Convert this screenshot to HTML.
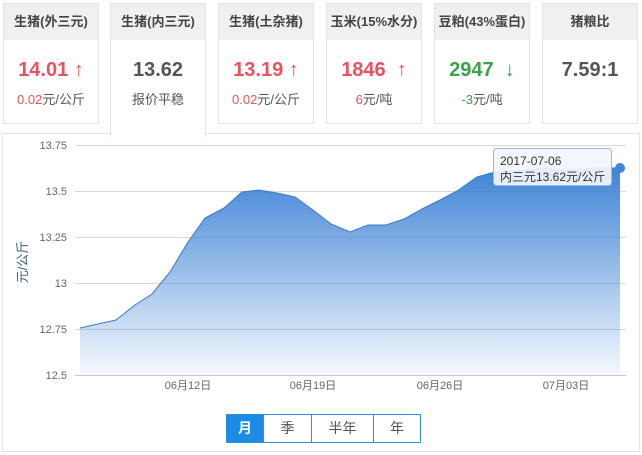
<!DOCTYPE html>
<html><head><meta charset="utf-8"><style>
body{margin:0;width:642px;height:455px;background:#fff;font-family:"Liberation Sans","Noto Sans CJK SC",sans-serif;position:relative;overflow:hidden}
.c{position:absolute;top:3px;width:96px;height:121px;border:1px solid #e3e3e3;background:#fff;text-align:center;box-sizing:border-box}
.c .h{height:36px;line-height:36px;background:#f0f0f0;font-size:13px;color:#444;font-weight:bold}
.c .v{font-size:20px;font-weight:bold;margin-top:17px;height:26px;line-height:26px}
.c .s{font-size:13px;color:#555;margin-top:6px}
.r{color:#e9525e}.g{color:#3aa34a}.k{color:#555}
.panel{position:absolute;left:2px;top:133px;width:638px;height:319px;border:1px solid #e3e3e3;box-sizing:border-box}
.act{height:134px;border-bottom:none;z-index:2;top:3px}
.btns{position:absolute;left:226px;top:414px;height:29px;display:flex;border:1px solid #2e8fdc;box-sizing:border-box}
.btns div{height:27px;line-height:27px;text-align:center;font-size:14px;color:#555;border-left:1px solid #2e8fdc}
</style></head><body>
<div class="panel"></div>
<div class="c" style="left:3px"><div class="h">生猪(外三元)</div><div class="v r">14.01 ↑</div><div class="s"><span class="r">0.02</span>元/公斤</div></div>
<div class="c act" style="left:110px;border-color:#e3e3e3"><div class="h">生猪(内三元)</div><div class="v k">13.62</div><div class="s">报价平稳</div></div>
<div class="c" style="left:218px"><div class="h">生猪(土杂猪)</div><div class="v r">13.19 ↑</div><div class="s"><span class="r">0.02</span>元/公斤</div></div>
<div class="c" style="left:326px"><div class="h">玉米(15%水分)</div><div class="v r">1846 &nbsp;↑</div><div class="s"><span class="r">6</span>元/吨</div></div>
<div class="c" style="left:434px"><div class="h">豆粕(43%蛋白)</div><div class="v g">2947 &nbsp;↓</div><div class="s"><span class="g">-3</span>元/吨</div></div>
<div class="c" style="left:542px"><div class="h">猪粮比</div><div class="v k">7.59:1</div></div>
<svg style="position:absolute;left:0;top:0" width="642" height="455">
<defs><linearGradient id="gr" x1="0" y1="0" x2="0" y2="1"><stop offset="0" stop-color="#3f83d6"/><stop offset="1" stop-color="#3f83d6" stop-opacity="0.05"/></linearGradient></defs>
<g stroke="#d8d8d8" stroke-width="1">
<line x1="75" y1="145.5" x2="626" y2="145.5"/><line x1="75" y1="191.5" x2="626" y2="191.5"/><line x1="75" y1="237.5" x2="626" y2="237.5"/><line x1="75" y1="283.5" x2="626" y2="283.5"/><line x1="75" y1="329.5" x2="626" y2="329.5"/><line x1="75" y1="375.5" x2="626" y2="375.5" stroke="#c8c8c8"/>
</g>
<path d="M80,328 L116,320 L135,305 L152,294 L170,272 L188,242 L205,218 L224,208 L242,192 L259,190 L277,193 L295,197 L313,210 L331,224 L350,232 L368,225 L386,225 L404,219 L422,209 L440,200 L457,191 L477,177 L495,172 L520,170 L545,168 L570,170 L595,168 L620,168 L620,375 L80,375Z" fill="url(#gr)"/>
<path d="M80,328 L116,320 L135,305 L152,294 L170,272 L188,242 L205,218 L224,208 L242,192 L259,190 L277,193 L295,197 L313,210 L331,224 L350,232 L368,225 L386,225 L404,219 L422,209 L440,200 L457,191 L477,177 L495,172 L520,170 L545,168 L570,170 L595,168 L620,168" fill="none" stroke="#3a7bc8" stroke-width="1"/>
<circle cx="620" cy="168" r="5" fill="#3a86d8"/>
<g font-size="11" fill="#666" text-anchor="end" font-family="Liberation Sans,sans-serif">
<text x="67" y="149">13.75</text><text x="67" y="195">13.5</text><text x="67" y="241">13.25</text><text x="67" y="287">13</text><text x="67" y="333">12.75</text><text x="67" y="379">12.5</text></g>
<g font-size="11" fill="#666" text-anchor="middle"><text x="188" y="389">06月12日</text><text x="313" y="389">06月19日</text><text x="440" y="389">06月26日</text><text x="566" y="389">07月03日</text></g>
<text x="27" y="262" transform="rotate(-90 27 262)" font-size="13" fill="#3a5f8a" text-anchor="middle">元/公斤</text>
<rect x="493.5" y="148.5" width="118" height="37" rx="3" fill="#f2f6fc" fill-opacity="0.92" stroke="#9ab8e0"/>
<text x="500" y="165" font-size="12" fill="#333">2017-07-06</text>
<text x="500" y="181" font-size="12" fill="#333">内三元13.62元/公斤</text>
</svg>
<div class="btns"><div style="width:36px;background:#1b8ce6;color:#fff;border-left:none;font-weight:bold">月</div><div style="width:47px">季</div><div style="width:61px">半年</div><div style="width:46px">年</div></div>
</body></html>
